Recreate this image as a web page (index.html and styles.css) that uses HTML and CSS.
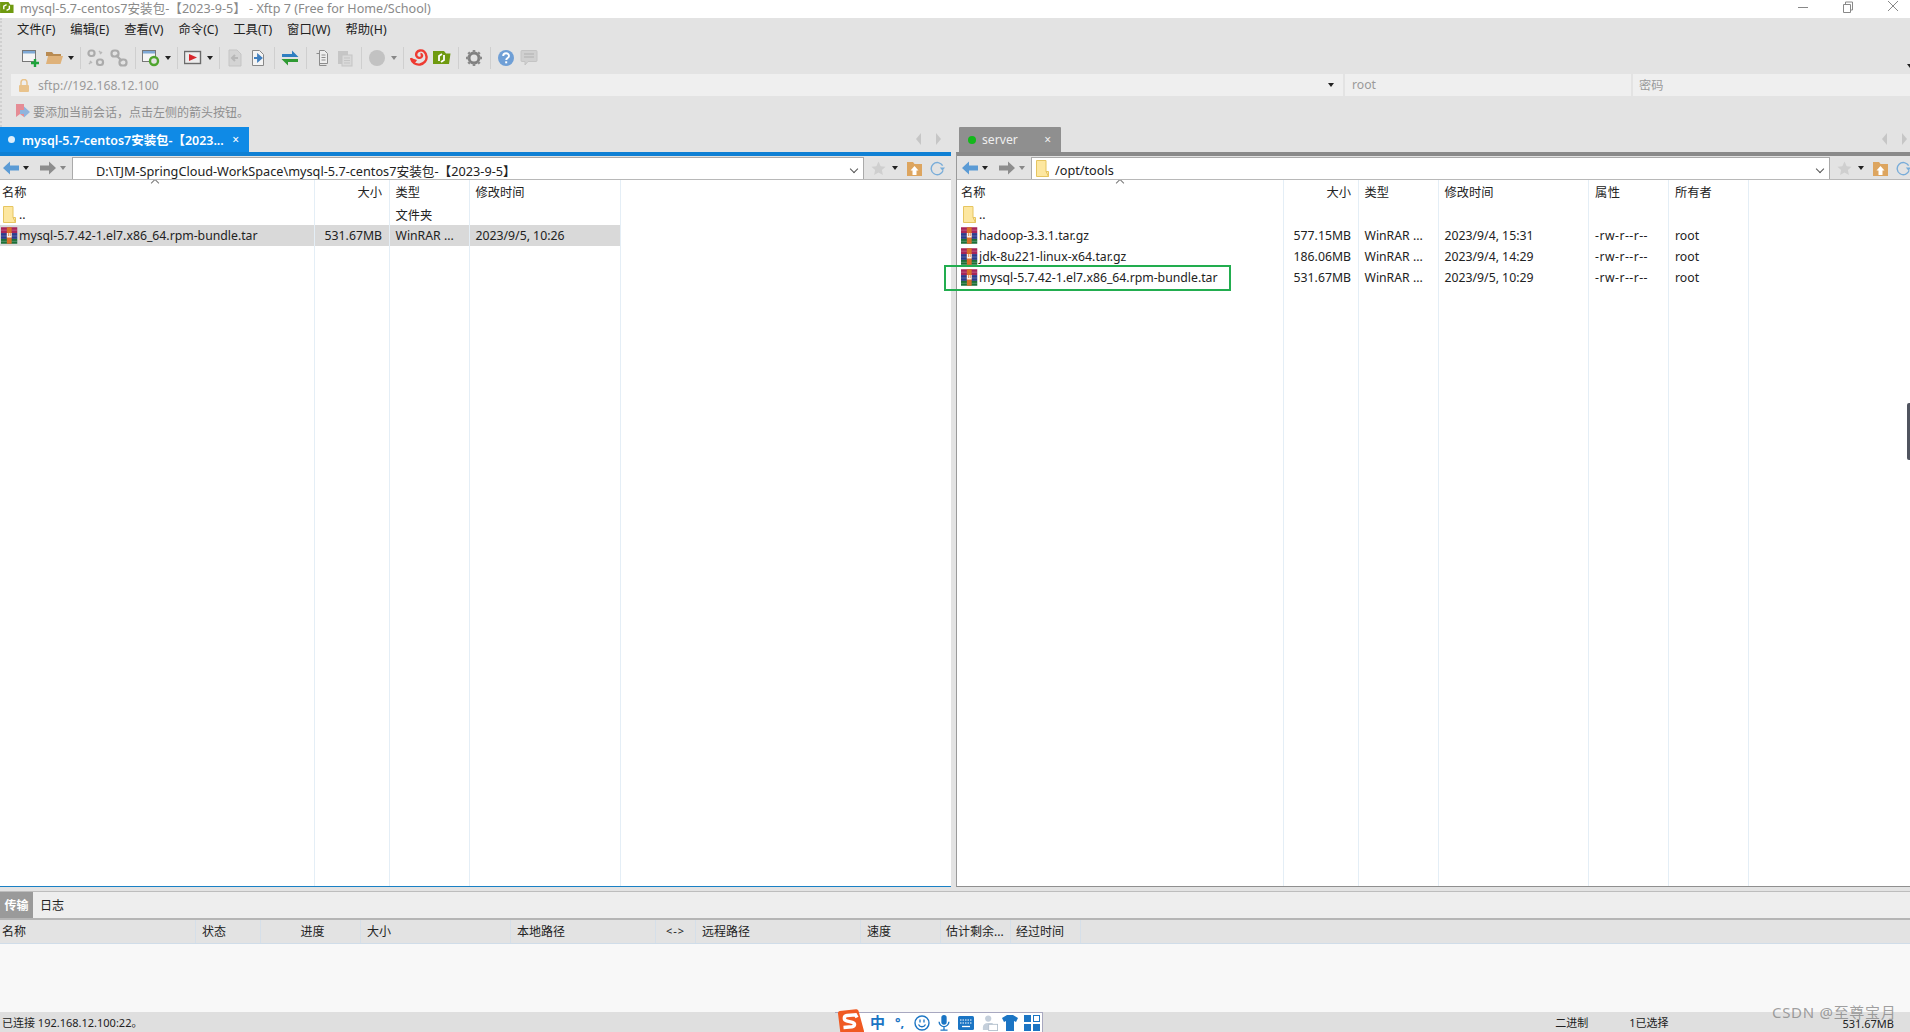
FILE: index.html
```html
<!DOCTYPE html>
<html lang="zh">
<head>
<meta charset="utf-8">
<title>Xftp 7</title>
<link rel="stylesheet" href="styles.css">
</head>
<body>
<svg class="defs" width="0" height="0">
  <symbol id="rar" viewBox="0 0 17 17">
    <rect x="0" y="0" width="17" height="6" fill="#a82458"/>
    <rect x="0" y="6" width="17" height="6" fill="#2b3a8c"/>
    <rect x="0" y="12" width="17" height="5" fill="#1d6f38"/>
    <rect x="6" y="0" width="5" height="17" fill="#d9702a"/>
    <path d="M0 3h6M11 3h6M0 9h6M11 9h6M0 14.500h6M11 14.500h6" stroke="#fff" stroke-opacity=".25"/>
    <path d="M6 10.500V6h1.200v3h.7V6h1.200v3h.7V6H11v4.500z" fill="#fff" fill-opacity=".9"/>
  </symbol>
  <symbol id="folder" viewBox="0 0 13 17">
    <path d="M.5.500h9.500v11h2.500v5H.5z" fill="#fde7a0" stroke="#e6c560"/>
    <path d="M10 11.500l2.500 5" stroke="#e6c560" fill="none"/>
  </symbol>
  <symbol id="back" viewBox="0 0 16 14">
    <path d="M0 7l7-6.500v4h9v5H7v4z"/>
  </symbol>
  <symbol id="fwd" viewBox="0 0 16 14">
    <path d="M16 7L9 .5v4H0v5h9v4z"/>
  </symbol>
  <symbol id="star" viewBox="0 0 16 16">
    <path d="M8 .5l2.300 5 5.200.6-3.900 3.500 1.100 5.300L8 12.200l-4.700 2.700 1.100-5.300L.5 6.100l5.200-.6z"/>
  </symbol>
  <symbol id="upfolder" viewBox="0 0 15 15">
    <path d="M0 1h6l1.500 2H15v12H0z" fill="#dda55f"/>
    <path d="M7.500 5l4 4.500H9.500V14h-4V9.500h-2z" fill="#fff"/>
  </symbol>
  <symbol id="refresh" viewBox="0 0 16 16">
    <path d="M13.500 5A6.500 6.500 0 1 0 14 10" fill="none" stroke="#79add9" stroke-width="1.500"/>
    <path d="M10.500 7h5.500l-2.700 3.500z" fill="#79add9"/>
  </symbol>
</svg>

<header class="titlebar">
  <svg class="app-icon" viewBox="0 0 16 14"><path d="M0 1h9l2 3h3.500v9H0z" fill="#6f9a10"/><path d="M4 9V5.500l3-1.500M10 5v3.500L7 10" stroke="#fff" stroke-width="1.500" fill="none"/></svg>
  <span class="title-text">mysql-5.7-centos7安装包-【2023-9-5】 - Xftp 7 (Free for Home/School)</span>
  <div class="win-controls">
    <svg class="win-btn" viewBox="0 0 12 12"><path d="M1 6.500h10" stroke="#888"/></svg>
    <svg class="win-btn" viewBox="0 0 12 12"><path d="M1.500 3.500h7v8h-7zM3.500 3.500v-2.500h7v8h-2" stroke="#888" fill="none"/></svg>
    <svg class="win-btn" viewBox="0 0 12 12"><path d="M1 0l10 10M11 0L1 10" stroke="#888" fill="none"/></svg>
  </div>
</header>

<div class="chrome">
  <nav class="menubar">
    <span>文件(F)</span><span>编辑(E)</span><span>查看(V)</span><span>命令(C)</span><span>工具(T)</span><span>窗口(W)</span><span>帮助(H)</span>
  </nav>

  <div class="toolbar">
    <svg class="tb" viewBox="0 0 18 18"><rect x=".5" y="1.500" width="13" height="11" fill="#f5f5f5" stroke="#777"/><rect x="1" y="2" width="12" height="2.500" fill="#7fa9d6"/><path d="M9 14h8M13 10v8" stroke="#1ea33b" stroke-width="2.400"/></svg>
    <svg class="tb" viewBox="0 0 18 18"><path d="M1 3h6l1.500 2H16v2H1z" fill="#b98b52"/><path d="M1 15l2-8h15l-2.500 8z" fill="#dfb27a"/></svg>
    <i class="caret"></i><i class="sep"></i>
    <svg class="tb dim" viewBox="0 0 18 18"><g fill="none" stroke="#999" stroke-width="2.200"><rect x="1.500" y="1.500" width="6" height="5.500" rx="2.500"/><rect x="10" y="10.500" width="6" height="5.500" rx="2.500"/></g><path d="M12 2l2 2M3 12l2 2M2 15l2-2M15 3l-2 2" stroke="#aaa" stroke-width="1.500"/></svg>
    <svg class="tb dim" viewBox="0 0 18 18"><g fill="none" stroke="#999" stroke-width="2.200"><rect x="1.500" y="1.500" width="7" height="6" rx="2.800"/><rect x="9.500" y="10.500" width="7" height="6" rx="2.800"/><path d="M6 6l6 6"/></g></svg>
    <i class="sep"></i>
    <svg class="tb" viewBox="0 0 18 18"><rect x=".5" y="1.500" width="13" height="11" fill="#f5f5f5" stroke="#777"/><rect x="1" y="2" width="12" height="2.500" fill="#7fa9d6"/><circle cx="12" cy="12" r="4" fill="#e3e3e3" stroke="#4fa52e" stroke-width="2.400"/></svg>
    <i class="caret"></i><i class="sep"></i>
    <svg class="tb" viewBox="0 0 18 18"><rect x=".5" y="2.500" width="16" height="12" fill="#ececec" stroke="#6b6b6b" stroke-width="1.400"/><path d="M5 5l8 3.500-8 3.500z" fill="#d8262c"/></svg>
    <i class="caret"></i><i class="sep"></i>
    <svg class="tb dim" viewBox="0 0 18 18"><path d="M3 1h8l4 4v12H3z" fill="#d0d0d0" stroke="#bbb"/><path d="M12 9H6.500M9 6l-3 3 3 3" stroke="#aaa" stroke-width="2" fill="none"/></svg>
    <svg class="tb" viewBox="0 0 18 18"><path d="M3.500 1.500h7l4 4v11h-11z" fill="#f4f4f4" stroke="#888"/><path d="M5 9h5M9 6l3.500 3L9 12z" stroke="#3f7fbf" stroke-width="1.800" fill="#3f7fbf"/></svg>
    <i class="sep"></i>
    <svg class="tb" viewBox="0 0 18 18"><path d="M1 8V5h10V1.500L17.500 8z" fill="#2f7fc1"/><path d="M17 10v3H7v3.500L.5 10z" fill="#2f9a33"/></svg>
    <i class="sep"></i>
    <svg class="tb" viewBox="0 0 18 18"><path d="M6.500 1.500h5l3 3v10h-8z" fill="#eee" stroke="#8c8c8c"/><path d="M3.500 4.500h3v12h7" fill="none" stroke="#8c8c8c"/><path d="M8.500 6h4M8.500 8.500h4M8.500 11h4" stroke="#8c8c8c"/></svg>
    <svg class="tb dim" viewBox="0 0 18 18"><rect x="2" y="2" width="10" height="13" fill="#bdbdbd"/><rect x="6" y="6" width="10" height="11" fill="#d6d6d6" stroke="#bbb"/><path d="M8 9h6M8 11.500h6M8 14h6" stroke="#bbb"/></svg>
    <i class="sep"></i>
    <svg class="tb" viewBox="0 0 18 18"><circle cx="9" cy="9" r="8" fill="#c2c2c2"/></svg>
    <i class="caret light"></i><i class="sep"></i>
    <svg class="tb" viewBox="0 0 18 18"><path d="M1 9c1 5 5 7 9 6.500 4-1 7-4 6.500-8C16 3 13 1 10 1.500 7 2 5.500 4.500 6.500 7c1 2 3.500 2.500 5 1 1-1 .5-3-1-3" fill="none" stroke="#ee3b32" stroke-width="2.400"/><path d="M1 9c2 .5 4 1.500 6 2 -1 2-3 3.500-3 3.500C2 13 1 11 1 9z" fill="#ee3b32"/></svg>
    <svg class="tb" viewBox="0 0 18 18"><path d="M0 2h11l2 2.500h4.500L16 15H0z" fill="#6f9a10"/><path d="M6 12V7l3-2M11 6v5l-3 2" stroke="#fff" stroke-width="1.800" fill="none"/></svg>
    <i class="sep"></i>
    <svg class="tb" viewBox="0 0 18 18"><circle cx="9" cy="9" r="5" fill="none" stroke="#7f7f7f" stroke-width="3"/><path d="M9 1v3M9 14v3M1 9h3M14 9h3M3.300 3.300l2.100 2.100M12.600 12.600l2.100 2.100M3.300 14.700l2.100-2.100M12.600 5.400l2.100-2.100" stroke="#8a8a8a" stroke-width="2.600"/></svg>
    <i class="sep"></i>
    <svg class="tb" viewBox="0 0 18 18"><circle cx="9" cy="9" r="8" fill="#6f9fd6"/><path d="M6.200 7c0-3.600 5.800-3.600 5.800 0 0 2-2.800 2-2.800 4" fill="none" stroke="#fff" stroke-width="1.900"/><rect x="8.200" y="12.300" width="2" height="2" fill="#fff"/></svg>
    <svg class="tb" viewBox="0 0 18 18"><path d="M2 1.500h14a1 1 0 0 1 1 1v9a1 1 0 0 1-1 1H8l-3 3.500v-3.500H2a1 1 0 0 1-1-1v-9a1 1 0 0 1 1-1z" fill="#d0d0d0" stroke="#c4c4c4"/><path d="M4 5h10M4 8h10" stroke="#bbb" stroke-width="1.400"/></svg>
    <i class="corner-caret"></i>
  </div>

  <div class="addressbar">
    <div class="field field-url">
      <svg class="lock" viewBox="0 0 12 13"><path d="M3 6V3.500a3 3 0 0 1 6 0V6" fill="none" stroke="#e9c38c" stroke-width="1.500"/><rect x="1" y="6" width="10" height="7" rx="1" fill="#e9c38c"/></svg>
      <span>sftp://192.168.12.100</span>
      <i class="caret dark"></i>
    </div>
    <div class="field field-user"><span>root</span></div>
    <div class="field field-pass"><span>密码</span></div>
  </div>

  <div class="hintbar">
    <svg class="hint-icon" viewBox="0 0 14 15"><path d="M0 0h8v13l-4-3-4 3z" fill="#e58c95"/><path d="M14 8L8 2.500V6H4v4h4v3.500z" fill="#8fb4dd"/></svg>
    <span>要添加当前会话，点击左侧的箭头按钮。</span>
  </div>
</div>

<main class="panes">
  <section class="pane pane-local">
    <div class="tabstrip">
      <div class="tab tab-active"><i class="dot dot-white"></i><b>mysql-5.7-centos7安装包-【2023...</b><span class="tab-x">×</span></div>
      <div class="tab-arrows"><i class="arr-l"></i><i class="arr-r"></i></div>
    </div>
    <div class="pane-frame frame-blue">
      <div class="pathbar">
        <svg class="nav nav-blue"><use href="#back"/></svg><i class="caret"></i>
        <svg class="nav nav-grey"><use href="#fwd"/></svg><i class="caret light"></i>
        <div class="pathbox"><span class="pathtext pt-local">D:\TJM-SpringCloud-WorkSpace\mysql-5.7-centos7安装包-【2023-9-5】</span><i class="chev"></i></div>
        <div class="path-tools">
          <svg class="ptool star"><use href="#star"/></svg><i class="caret"></i>
          <svg class="ptool"><use href="#upfolder"/></svg>
          <svg class="ptool"><use href="#refresh"/></svg>
        </div>
      </div>
      <div class="list list-local">
        <div class="row head"><span class="c name">名称<i class="sort"></i></span><span class="c size">大小</span><span class="c type">类型</span><span class="c time">修改时间</span></div>
        <div class="row"><span class="c name"><svg class="ficon folder-ic"><use href="#folder"/></svg>..</span><span class="c size"></span><span class="c type">文件夹</span><span class="c time"></span></div>
        <div class="row selected"><span class="c name"><svg class="ficon"><use href="#rar"/></svg>mysql-5.7.42-1.el7.x86_64.rpm-bundle.tar</span><span class="c size">531.67MB</span><span class="c type">WinRAR ...</span><span class="c time">2023/9/5, 10:26</span></div>
      </div>
    </div>
  </section>

  <section class="pane pane-remote">
    <div class="tabstrip">
      <div class="tab tab-grey"><i class="dot dot-green"></i><span>server</span><span class="tab-x">×</span></div>
      <div class="tab-arrows"><i class="arr-l"></i><i class="arr-r"></i></div>
    </div>
    <div class="pane-frame frame-grey">
      <div class="pathbar">
        <svg class="nav nav-blue"><use href="#back"/></svg><i class="caret"></i>
        <svg class="nav nav-grey"><use href="#fwd"/></svg><i class="caret light"></i>
        <div class="pathbox"><svg class="path-folder"><use href="#folder"/></svg><span class="pathtext">/opt/tools</span><i class="chev"></i></div>
        <div class="path-tools">
          <svg class="ptool star"><use href="#star"/></svg><i class="caret"></i>
          <svg class="ptool"><use href="#upfolder"/></svg>
          <svg class="ptool"><use href="#refresh"/></svg>
        </div>
      </div>
      <div class="list list-remote">
        <div class="row head"><span class="c name">名称<i class="sort"></i></span><span class="c size">大小</span><span class="c type">类型</span><span class="c time">修改时间</span><span class="c attr">属性</span><span class="c owner">所有者</span></div>
        <div class="row"><span class="c name"><svg class="ficon folder-ic"><use href="#folder"/></svg>..</span><span class="c size"></span><span class="c type"></span><span class="c time"></span><span class="c attr"></span><span class="c owner"></span></div>
        <div class="row"><span class="c name"><svg class="ficon"><use href="#rar"/></svg>hadoop-3.3.1.tar.gz</span><span class="c size">577.15MB</span><span class="c type">WinRAR ...</span><span class="c time">2023/9/4, 15:31</span><span class="c attr">-rw-r--r--</span><span class="c owner">root</span></div>
        <div class="row"><span class="c name"><svg class="ficon"><use href="#rar"/></svg>jdk-8u221-linux-x64.tar.gz</span><span class="c size">186.06MB</span><span class="c type">WinRAR ...</span><span class="c time">2023/9/4, 14:29</span><span class="c attr">-rw-r--r--</span><span class="c owner">root</span></div>
        <div class="row"><span class="c name"><svg class="ficon"><use href="#rar"/></svg>mysql-5.7.42-1.el7.x86_64.rpm-bundle.tar</span><span class="c size">531.67MB</span><span class="c type">WinRAR ...</span><span class="c time">2023/9/5, 10:29</span><span class="c attr">-rw-r--r--</span><span class="c owner">root</span></div>
        <div class="highlight-box"></div>
      </div>
    </div>
  </section>
</main>

<section class="transfer">
  <div class="t-tabs"><span class="t-tab t-active">传输</span><span class="t-tab">日志</span></div>
  <div class="t-head">
    <span class="th w-name">名称</span>
    <span class="th w-state">状态</span>
    <span class="th w-prog">进度</span>
    <span class="th w-size">大小</span>
    <span class="th w-local">本地路径</span>
    <span class="th w-dir">&lt;-&gt;</span>
    <span class="th w-remote">远程路径</span>
    <span class="th w-speed">速度</span>
    <span class="th w-eta">估计剩余...</span>
    <span class="th w-elapsed">经过时间</span>
  </div>
  <div class="t-body"></div>
</section>

<footer class="statusbar">
  <span class="st-left">已连接 192.168.12.100:22。</span>
  <span class="st-mode">二进制</span>
  <span class="st-sel">1已选择</span>
  <span class="st-size">531.67MB</span>
</footer>

<div class="ime">
  <svg class="ime-logo" viewBox="0 0 29 26"><path d="M3 4.500q-.3-2 1.700-2.500L21 .2q2-.2 2.500 1.500L29 22q.5 2-1.500 2.500L8 28q-2 .3-2.300-1.500z" fill="#f05a22"/><path d="M22 8.500l-1.500-2.800-8.500.8c-3.500.5-3.500 4.500-.5 5.300l6 1.500c3 1 2.500 4-.5 4.500l-8.500.7" fill="none" stroke="#fff" stroke-width="3.400"/></svg>
  <span class="ime-zh">中</span>
  <span class="ime-punc">°,</span>
  <svg class="ime-ic" viewBox="0 0 16 16"><circle cx="8" cy="8" r="7" fill="none" stroke="#1b75c4" stroke-width="1.400"/><path d="M4.500 9.500c1.500 3 5.500 3 7 0M6 4.500v3M10 4.500v3" fill="none" stroke="#1b75c4" stroke-width="1.300"/></svg>
  <svg class="ime-ic" viewBox="0 0 16 18"><rect x="5" y="0" width="6" height="11" rx="3" fill="#1b75c4"/><path d="M2.500 7.500a5.500 5.500 0 0 0 11 0M8 13v4M4 17h8" fill="none" stroke="#1b75c4" stroke-width="1.500"/></svg>
  <svg class="ime-ic" viewBox="0 0 16 14"><rect x="0" y="0" width="16" height="14" rx="1.500" fill="#1b75c4"/><path d="M2 4h12M2 7h12" stroke="#fff" stroke-dasharray="1.500 1"/><path d="M4 10.500h8" stroke="#fff" stroke-width="1.300"/></svg>
  <svg class="ime-ic ime-person" viewBox="0 0 18 18"><circle cx="7" cy="4" r="3.500" fill="#c4cfdb"/><path d="M1 17v-3c0-3 2-5 6-5h5v8z" fill="#c4cfdb"/><rect x="7.500" y="10.500" width="10" height="7" fill="#fff" stroke="#b2bfcc"/></svg>
  <svg class="ime-ic" viewBox="0 0 16 16"><path d="M5 0h6l5 3-2 4-2-1v10H4V6L2 7 0 3z" fill="#1b75c4"/></svg>
  <svg class="ime-ic" viewBox="0 0 16 16"><rect x="0" y="0" width="7" height="7" fill="#1b75c4"/><rect x="9.500" y="0.500" width="6" height="6" fill="none" stroke="#1b75c4"/><rect x="0" y="9" width="7" height="7" fill="#1b75c4"/><rect x="9" y="9" width="7" height="7" fill="#1b75c4"/></svg>
</div>
<div class="watermark">CSDN @至尊宝月</div>
<div class="edge-handle"></div>
</body>
</html>
```

FILE: styles.css
```css
* { box-sizing: border-box; }
html, body { margin: 0; padding: 0; height: 100%; overflow: hidden; }
body {
  width: 1910px; height: 1032px; position: relative;
  display: flex; flex-direction: column;
  font-family: "Noto Sans", "Noto Sans CJK SC", sans-serif;
  font-size: 12px; color: #222; background: #e3e3e3;
}
.defs { position: absolute; }
i { display: block; font-style: normal; flex: none; }

.titlebar { height: 18px; background: #fff; display: flex; align-items: center; color: #8a8a8a; font-size: 12.600px; flex: none; padding-bottom: 4px; overflow: hidden; }
.app-icon { width: 15px; height: 13px; flex: none; margin-right: 5px; }
.title-text { white-space: nowrap; }
.win-controls { margin-left: auto; display: flex; gap: 33px; padding-right: 11px; align-items: center; }
.win-btn { width: 12px; height: 12px; display: block; }

.chrome { flex: none; height: 109px; background: #e3e3e3; display: flex; flex-direction: column; border-left: 2px dotted #d0d0d0; }
.menubar { height: 24px; display: flex; align-items: center; gap: 15px; padding: 0 0 2px 15px; color: #222; font-size: 12.300px; }
.toolbar { height: 32px; display: flex; align-items: center; padding-left: 17.500px; position: relative; }
.tb { width: 18px; height: 18px; flex: none; margin: 0 2.500px; }
.dim { opacity: .75; }
.sep { width: 1px; height: 22px; background: #cfcfcf; margin: 0 4px; }
.caret { width: 0; height: 0; border: 3.500px solid transparent; border-top: 4px solid #222; border-bottom: 0; margin: 0 2px; }
.caret.light { border-top-color: #888; }
.corner-caret { position: absolute; right: -3px; top: 22px; width: 0; height: 0; border: 3.500px solid transparent; border-top: 4px solid #222; border-bottom: 0; }

.addressbar { height: 22px; display: flex; gap: 2px; margin-left: 9px; color: #9a9a9a; font-size: 12.200px; }
.field { background: #efefef; height: 22px; display: flex; align-items: center; }
.field-url { width: 1332px; padding-left: 7px; padding-right: 9px; }
.field-url .caret { margin: 0 0 0 auto; }
.field-user { width: 286px; padding-left: 7px; padding-bottom: 2px; }
.field-pass { flex: 1; padding-left: 6px; padding-bottom: 1px; }
.lock { width: 12px; height: 13px; margin-right: 8px; flex: none; }

.hintbar { height: 31px; display: flex; align-items: center; color: #8f8f8f; padding-left: 14px; gap: 3px; font-size: 12px; }
.hint-icon { width: 14px; height: 15px; flex: none; }

.panes { flex: none; height: 760px; display: flex; gap: 5px; font-size: 12.250px; }
.pane { display: flex; flex-direction: column; min-width: 0; }
.pane-local { width: 951px; }
.pane-remote { flex: 1; }
.tabstrip { height: 25px; display: flex; align-items: stretch; justify-content: space-between; flex: none; }
.tab { height: 25px; display: flex; align-items: center; color: #fff; white-space: nowrap; }
.tab-active { width: 249px; background: #0f8ae6; padding-left: 8px; }
.tab-active b { font-weight: 600; font-size: 12.450px; margin-left: 7px; }
.tab-grey { width: 102px; background: #8f8f8f; padding-left: 9px; margin-left: 3px; color: #eee; border-radius: 1px 1px 0 0; }
.tab-grey span:nth-child(2) { margin-left: 6px; font-size: 12.200px; }
.tab-x { margin-left: auto; padding-right: 10px; font-size: 12px; }
.dot { width: 7px; height: 7px; border-radius: 50%; }
.dot-white { background: #dceefb; }
.dot-green { width: 8px; height: 8px; background: #12b81a; }
.tab-arrows { display: flex; gap: 15px; padding: 6px 10px 0 0; align-items: flex-start; }
.pane-remote .tab-arrows { padding-right: 3px; }
.arr-l { width: 0; height: 0; border: 6px solid transparent; border-right: 5px solid #c6c6c6; border-left: 0; }
.arr-r { width: 0; height: 0; border: 6px solid transparent; border-left: 5px solid #c6c6c6; border-right: 0; }

.pane-frame { flex: 1; display: flex; flex-direction: column; min-height: 0; background: #fff; }
.frame-blue { border-top: 4px solid #0f80d4; border-bottom: 1px solid #1a80c4; }
.frame-grey { border-top: 4px solid #8a8a8a; border-bottom: 1px solid #8f8f8f; border-left: 1px solid #9a9a9a; }

.pathbar { height: 24px; background: #e3e3e3; display: flex; align-items: center; flex: none; border-bottom: 1px solid #b8b8b8; padding-left: 3px; padding-top: 1px; }
.pane-remote .pathbar { padding-left: 5px; }
.pathbar .caret { margin: 0 3px 0 4px; }
.nav { width: 16px; height: 14px; flex: none; }
.nav-blue { fill: #5b9bd5; }
.nav-grey { fill: #8d8d8d; margin-left: 8px; }
.pathbox { flex: 1; align-self: stretch; background: #fff; border: 1px solid #aaa; border-bottom: 0; margin-left: 3px; display: flex; align-items: center; min-width: 0; }
.pathtext { white-space: nowrap; color: #222; margin-left: 23px; margin-top: 3px; font-size: 12.700px; }
.pathbox .path-folder { width: 13px; height: 17px; flex: none; margin-left: 4px; }
.pathbox .path-folder + .pathtext { margin-left: 6px; }
.chev { margin-left: auto; margin-right: 6px; margin-top: 1px; width: 6px; height: 6px; border-right: 1px solid #555; border-bottom: 1px solid #555; transform: rotate(45deg); }
.path-tools { width: 87px; flex: none; display: flex; align-items: center; padding-left: 7px; }
.pane-remote .path-tools { width: 80px; }
.ptool { width: 15px; height: 15px; flex: none; margin-right: 8.500px; }
.ptool.star { fill: #cfcfcf; margin-right: 0; }
.pathbar .path-tools .caret { margin: 0 9px 0 5.500px; }

.list { flex: 1; position: relative; min-height: 0; }
.row { display: flex; height: 21px; align-items: center; white-space: nowrap; }
.row.head { height: 24px; padding-bottom: 1px; }
.row.selected { background: #d9d9d9; width: 620px; }
.c { display: flex; align-items: center; flex: none; height: 100%; padding-left: 6px; overflow: hidden; }
.list::before { content: ""; position: absolute; inset: 0; pointer-events: none; background-repeat: no-repeat; }
.list-local::before {
  background-image: linear-gradient(#e4eef6, #e4eef6), linear-gradient(#e4eef6, #e4eef6), linear-gradient(#e4eef6, #e4eef6), linear-gradient(#e4eef6, #e4eef6);
  background-size: 1px 100%, 1px 100%, 1px 100%, 1px 100%;
  background-position: 314px 0, 389px 0, 469px 0, 620px 0;
}
.list-remote::before {
  background-image: linear-gradient(#e4eef6, #e4eef6), linear-gradient(#e4eef6, #e4eef6), linear-gradient(#e4eef6, #e4eef6), linear-gradient(#e4eef6, #e4eef6), linear-gradient(#e4eef6, #e4eef6), linear-gradient(#e4eef6, #e4eef6);
  background-size: 1px 100%, 1px 100%, 1px 100%, 1px 100%, 1px 100%, 1px 100%;
  background-position: 326px 0, 401px 0, 481px 0, 631px 0, 711px 0, 791px 0;
}
.name { width: 314px; padding-left: 1px; position: relative; }
.head .name { padding-left: 2px; }
.list-remote .name { width: 326px; padding-left: 4px; }
.size { width: 75px; justify-content: flex-end; padding: 0 7px 0 0; }
.type { width: 80px; padding-left: 6.500px; }
.time { width: 151px; padding-left: 6.500px; }
.list-remote .time { width: 150px; }
.attr { width: 80px; letter-spacing: .45px; padding-left: 7px; }
.owner { width: 80px; padding-left: 7px; }
.sort { position: absolute; left: 152px; top: 0; width: 6px; height: 6px; border-left: 1px solid #777; border-top: 1px solid #777; transform: rotate(45deg); }
.list-remote .sort { left: 160px; }
.ficon { width: 16.500px; height: 17px; flex: none; margin-right: 1.500px; }
.folder-ic { width: 13px; height: 17px; margin: 0 3px 0 2px; }
.highlight-box { position: absolute; left: -13px; top: 85px; width: 287px; height: 26px; border: 2px solid #22ad4f; pointer-events: none; }

.transfer { flex: none; height: 125px; display: flex; flex-direction: column; padding-top: 4px; }
.t-tabs { height: 29px; background: #eee; display: flex; flex: none; border-top: 1px solid #bdbdbd; border-bottom: 2px solid #b5b5b5; }
.t-tab { width: 33px; display: flex; align-items: center; justify-content: center; }
.t-active { background: #9a9a9a; color: #fff; font-weight: 600; }
.t-tab + .t-tab { margin-left: 2px; width: 34px; }
.t-head { height: 24px; background: #e3e3e3; display: flex; flex: none; border-bottom: 1px solid #d0dde9; }
.th { height: 100%; display: flex; align-items: center; padding: 0 0 2px 6px; border-right: 1px solid #d5dfe9; flex: none; }
.w-name { width: 196px; padding-left: 2px; }
.w-state { width: 65px; }
.w-prog { width: 100px; justify-content: center; padding-left: 4px; }
.w-size { width: 150px; }
.w-local { width: 145px; }
.w-dir { width: 40px; justify-content: center; font-size: 11px; letter-spacing: 1px; padding: 0 0 2px; }
.w-remote { width: 165px; }
.w-speed { width: 80px; }
.w-eta { width: 70px; padding-left: 5px; white-space: nowrap; }
.w-elapsed { width: 70px; padding-left: 5px; }
.t-body { flex: 1; background: #f8f8f8; }

.statusbar { flex: 1; background: #dfdfdf; display: flex; align-items: center; font-size: 11px; padding-left: 2px; color: #222; white-space: nowrap; }
.st-mode { margin-left: auto; margin-right: 41px; }
.st-sel { margin-right: 174px; }
.st-size { margin-right: 16px; line-height: 10px; margin-top: 4px; }

.ime { position: absolute; left: 835px; top: 1012px; width: 208px; height: 20px; display: flex; align-items: center; gap: 6px; background: linear-gradient(90deg, transparent 10px, #fff 10px); border-top: 1px solid #a8a8c0; border-right: 1px solid #a8a8c0; padding-left: 35px; }
.ime-logo { position: absolute; left: 0; top: -4px; width: 29px; height: 26px; }
.ime-zh { color: #1b75c4; font-weight: 700; font-size: 15px; line-height: 19px; }
.ime-punc { color: #1b75c4; font-weight: 700; font-size: 13px; line-height: 19px; margin: 0 4px 0 4px; }
.ime-ic { width: 16px; height: 16px; flex: none; }
.ime-person { margin: 0 -2px 0 2px; }
.watermark { position: absolute; left: 1772px; top: 1005px; font-size: 15px; line-height: 14px; color: rgba(130,130,130,.75); letter-spacing: .7px; white-space: nowrap; }
.edge-handle { position: absolute; right: 0; top: 403px; width: 3px; height: 57px; background: #50545f; border-radius: 2px 0 0 2px; }
```
